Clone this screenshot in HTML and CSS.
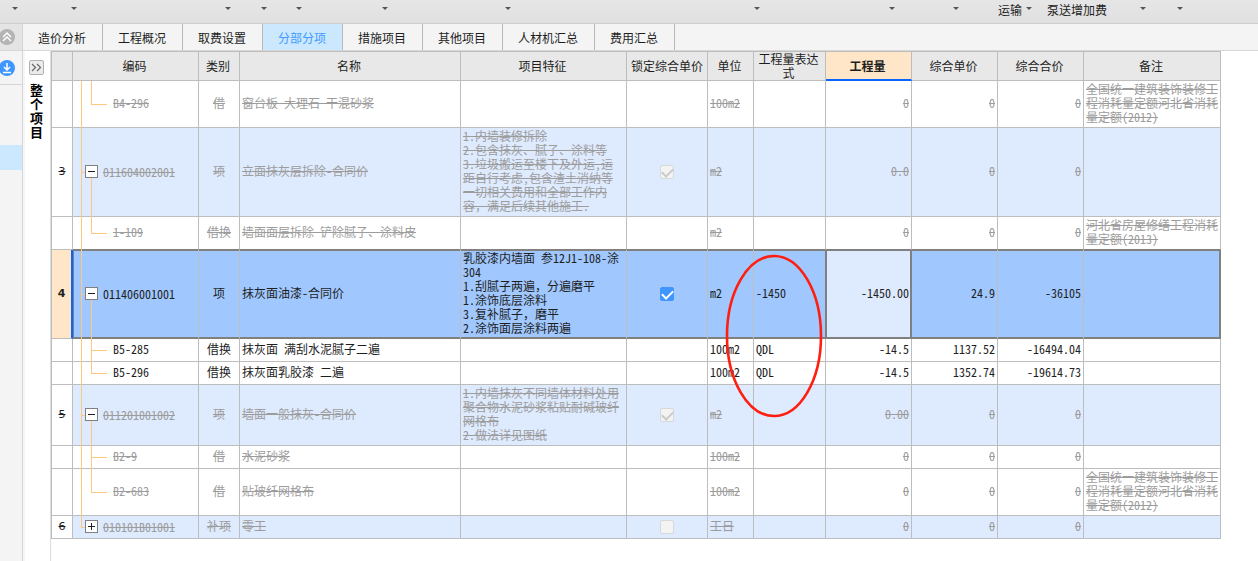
FILE: index.html
```html
<!DOCTYPE html>
<html lang="zh-CN">
<head>
<meta charset="utf-8">
<title>分部分项</title>
<link rel="stylesheet" href="styles.css">
</head>
<body>
<div class="app">
  <header class="toolbar">
    <button class="tool" aria-label="菜单"><i class="caret"></i></button>
    <button class="tool" aria-label="菜单"><i class="caret"></i></button>
    <button class="tool" aria-label="菜单"><i class="caret"></i></button>
    <button class="tool" aria-label="菜单"><i class="caret"></i></button>
    <button class="tool" aria-label="菜单"><i class="caret"></i></button>
    <button class="tool" aria-label="菜单"><i class="caret"></i></button>
    <button class="tool" aria-label="菜单"><i class="caret"></i></button>
    <button class="tool" aria-label="菜单"><i class="caret"></i></button>
    <button class="tool" aria-label="菜单"><i class="caret"></i></button>
    <button class="tool" aria-label="菜单"><i class="caret"></i></button>
    <button class="tool">运输<i class="caret"></i></button>
    <button class="tool">泵送增加费</button>
    <button class="tool" aria-label="菜单"><i class="caret"></i></button>
    <button class="tool" aria-label="菜单"><i class="caret"></i></button>
  </header>

  <nav class="tabs">
    <button class="fold" aria-label="折叠">
      <svg width="16" height="16" viewBox="0 0 16 16"><circle cx="8" cy="8" r="8" fill="#b4b4b4"/><path d="M4 8l4-4 4 4M4 12l4-4 4 4" fill="none" stroke="#fff" stroke-width="1.5"/></svg>
    </button>
    <button class="tab">造价分析</button>
    <button class="tab">工程概况</button>
    <button class="tab">取费设置</button>
    <button class="tab tab-active">分部分项</button>
    <button class="tab">措施项目</button>
    <button class="tab">其他项目</button>
    <button class="tab">人材机汇总</button>
    <button class="tab">费用汇总</button>
  </nav>

  <div class="main">
    <aside class="rail">
      <button class="rail-top" aria-label="导入">
        <svg width="16" height="16" viewBox="0 0 16 16"><circle cx="8" cy="8" r="8" fill="#4096ff"/><path d="M8 3v7M5 7l3 3 3-3M4 12.500h8" fill="none" stroke="#fff" stroke-width="1.500"/></svg>
      </button>
      <div class="rail-item"></div>
    </aside>
    <aside class="project">
      <button class="expand" aria-label="展开">
        <svg width="13" height="13" viewBox="0 0 13 13"><path d="M2 3l3.500 3.500L2 10M7 3l3.500 3.500L7 10" fill="none" stroke="#666" stroke-width="1.200"/></svg>
      </button>
      <div class="project-name">整个项目</div>
    </aside>
    <main class="sheet">
      <table class="grid">
        <colgroup>
          <col class="c-num"><col class="c-code"><col class="c-type"><col class="c-name"><col class="c-feat"><col class="c-lock"><col class="c-unit"><col class="c-expr"><col class="c-qty"><col class="c-qty"><col class="c-qty"><col>
        </colgroup>
        <thead>
          <tr><th></th><th>编码</th><th>类别</th><th>名称</th><th>项目特征</th><th class="tight">锁定综合单价</th><th>单位</th><th>工程量表达式</th><th class="current">工程量</th><th>综合单价</th><th>综合合价</th><th>备注</th></tr>
        </thead>
        <tbody>
          <tr class="off"><td class="num"></td><td class="code child last"><span>B4-296</span></td><td class="mid">借</td><td>窗台板 大理石 干混砂浆</td><td></td><td></td><td>100m2</td><td></td><td class="val">0</td><td class="val">0</td><td class="val">0</td><td class="note">全国统一建筑装饰装修工<br>程消耗量定额河北省消耗<br>量定额(2012)</td></tr>
          <tr class="off item"><td class="num">3</td><td class="code parent"><button class="toggle" aria-label="收起"></button><span>011604002001</span></td><td class="mid">项</td><td>立面抹灰层拆除-合同价</td><td>1.内墙装修拆除<br>2.包含抹灰、腻子、涂料等<br>3.垃圾搬运至楼下及外运,运<br>距自行考虑,包含渣土消纳等<br>一切相关费用和全部工作内<br>容，满足后续其他施工.</td><td class="mid"><input type="checkbox" class="check" aria-label="锁定综合单价" checked disabled></td><td>m2</td><td></td><td class="val">0.0</td><td class="val">0</td><td class="val">0</td><td></td></tr>
          <tr class="off before-current"><td class="num"></td><td class="code child last"><span>1-109</span></td><td class="mid">借换</td><td>墙面面层拆除 铲除腻子、涂料皮</td><td></td><td></td><td>m2</td><td></td><td class="val">0</td><td class="val">0</td><td class="val">0</td><td class="note">河北省房屋修缮工程消耗<br>量定额(2013)</td></tr>
          <tr class="selected"><td class="num">4</td><td class="code parent"><button class="toggle" aria-label="收起"></button><span>011406001001</span></td><td class="mid">项</td><td>抹灰面油漆-合同价</td><td>乳胶漆内墙面 参12J1-108-涂<br>304<br>1.刮腻子两遍，分遍磨平<br>1.涂饰底层涂料<br>3.复补腻子，磨平<br>2.涂饰面层涂料两遍</td><td class="mid"><input type="checkbox" class="check" aria-label="锁定综合单价" checked></td><td>m2</td><td class="pre-focus">-1450</td><td class="val focus">-1450.00</td><td class="val">24.9</td><td class="val">-36105</td><td class="end"></td></tr>
          <tr><td class="num"></td><td class="code child"><span>B5-285</span></td><td class="mid">借换</td><td>抹灰面 满刮水泥腻子二遍</td><td></td><td></td><td>100m2</td><td>QDL</td><td class="val">-14.5</td><td class="val">1137.52</td><td class="val">-16494.04</td><td></td></tr>
          <tr><td class="num"></td><td class="code child last"><span>B5-296</span></td><td class="mid">借换</td><td>抹灰面乳胶漆 二遍</td><td></td><td></td><td>100m2</td><td>QDL</td><td class="val">-14.5</td><td class="val">1352.74</td><td class="val">-19614.73</td><td></td></tr>
          <tr class="off item"><td class="num">5</td><td class="code parent"><button class="toggle" aria-label="收起"></button><span>011201001002</span></td><td class="mid">项</td><td>墙面一般抹灰-合同价</td><td>1.内墙抹灰不同墙体材料处用<br>聚合物水泥砂浆粘贴耐碱玻纤<br>网格布<br>2.做法详见图纸</td><td class="mid"><input type="checkbox" class="check" aria-label="锁定综合单价" checked disabled></td><td>m2</td><td></td><td class="val">0.00</td><td class="val">0</td><td class="val">0</td><td></td></tr>
          <tr class="off"><td class="num"></td><td class="code child"><span>B2-9</span></td><td class="mid">借</td><td>水泥砂浆</td><td></td><td></td><td>100m2</td><td></td><td class="val">0</td><td class="val">0</td><td class="val">0</td><td></td></tr>
          <tr class="off"><td class="num"></td><td class="code child last"><span>B2-683</span></td><td class="mid">借</td><td>贴玻纤网格布</td><td></td><td></td><td>100m2</td><td></td><td class="val">0</td><td class="val">0</td><td class="val">0</td><td class="note">全国统一建筑装饰装修工<br>程消耗量定额河北省消耗<br>量定额(2012)</td></tr>
          <tr class="off item"><td class="num">6</td><td class="code parent closed"><button class="toggle" aria-label="展开"></button><span>010101B01001</span></td><td class="mid">补项</td><td>零工</td><td></td><td class="mid"><input type="checkbox" class="check" aria-label="锁定综合单价" disabled></td><td>工日</td><td></td><td class="val">0</td><td class="val">0</td><td class="val">0</td><td></td></tr>
        </tbody>
      </table>
      <svg class="marker" width="98" height="164" viewBox="0 0 98 164"><ellipse cx="49" cy="82" rx="47" ry="80" fill="none" stroke="#ff1e10" stroke-width="2.600"/></svg>
    </main>
  </div>
</div>
</body>
</html>
```
FILE: styles.css
```css
* { box-sizing: border-box; }

body {
  margin: 0;
  background: #fff;
  color: #1e1e1e;
  font: 12px/14px "Noto Sans Mono CJK SC", "Noto Sans CJK SC", sans-serif;
  overflow: hidden;
}

button {
  padding: 0;
  border: 0;
  background: none;
  color: inherit;
  font: inherit;
}

svg { display: block; }

.app {
  display: flex;
  flex-direction: column;
  height: 100vh;
}

/* toolbar */
.toolbar {
  display: grid;
  grid-template-columns: 18px 59px 154px 36px 35px 86px 123px 249px 135px 64px 73px 75px 39px 37px;
  height: 24px;
  padding-bottom: 4px;
  background: linear-gradient(#e6e6e6, #e0e0e0);
  border-bottom: 1px solid #cdcdcd;
}

.tool {
  display: flex;
  align-items: center;
  justify-content: flex-end;
  gap: 4px;
  white-space: nowrap;
}

.caret {
  width: 0;
  height: 0;
  margin-bottom: 2px;
  border: 3px solid transparent;
  border-top-color: #555;
  border-bottom: 0;
}

/* page tabs */
.tabs {
  display: flex;
  height: 27px;
  background: #f4f4f4;
  border-bottom: 1px solid #d8d8d8;
}

.fold {
  display: flex;
  align-items: center;
  width: 23px;
  background: #e4e4e4;
  border-right: 1px solid #d4d4d4;
}

.fold svg, .rail-top svg { margin-left: -1px; }

.tab {
  padding: 2px 16px 0 15px;
  border-right: 1px solid #b8b8b8;
}

.tab-active {
  background: #cce8ff;
  color: #409aff;
}

/* left side */
.main {
  display: flex;
  flex: 1;
  min-height: 0;
}

.rail {
  width: 25px;
  background: linear-gradient(90deg, #f4f4f4 22px, #d6d6d6 22px 23px, #f6f6f6 23px);
}

.rail-top {
  display: flex;
  align-items: center;
  width: 22px;
  height: 34px;
  border-bottom: 1px solid #d6d6d6;
}

.rail-item {
  width: 22px;
  height: 25px;
  margin-top: 60px;
  background: #cce8ff;
}

.project {
  display: flex;
  flex-direction: column;
  align-items: center;
  width: 26px;
  padding: 9px 2px 0 0;
  border-right: 1px solid #dcdcdc;
}

.expand {
  width: 15px;
  height: 15px;
  border: 1px solid #b0b0b0;
  border-radius: 2px;
  background: #ebebeb;
}

.project-name {
  width: 13px;
  margin-top: 8px;
  color: #000;
  font-size: 13px;
  font-weight: 700;
  word-break: break-all;
}

/* bill of quantities */
.sheet {
  position: relative;
  flex: 1;
  padding-right: 37px;
}

.grid {
  width: 100%;
  table-layout: fixed;
  border-spacing: 0;
  border-top: 1px solid #bdbdbd;
  border-left: 1px solid #bdbdbd;
}

.c-num { width: 21px; }
.c-code { width: 126px; }
.c-type { width: 41px; }
.c-name { width: 221px; }
.c-feat { width: 166px; }
.c-lock { width: 81px; }
.c-unit { width: 46px; }
.c-expr { width: 72px; }
.c-qty { width: 86px; }

th {
  height: 29px;
  padding: 0 6px 0 4px;
  background: #e8e8e8;
  border-right: 1px solid #bdbdbd;
  border-bottom: 1px solid #bdbdbd;
  font-weight: 400;
}

.tight { padding: 0; }

.current {
  background: #ffe6c8;
  border-bottom: 2px solid #0a64ff;
  font-weight: 700;
}

td {
  height: 23px;
  padding: 1px 2px 3px;
  border-right: 1px solid #bdbdbd;
  border-bottom: 1px solid #bdbdbd;
}

.mid { text-align: center; }
.val { text-align: right; }
.note { white-space: nowrap; }

.num {
  padding: 0;
  font-family: "DejaVu Sans", sans-serif;
  font-size: 11px;
  text-align: center;
}

.off td {
  color: #9c9c9c;
  text-decoration: line-through;
}

.off .num { color: #1e1e1e; }
.item td { background: #deeafe; }
.item .num { background: #fff; }

/* tree lines in the code column */
.code { position: relative; }

.code::before, .code::after {
  content: "";
  position: absolute;
  top: 0;
  bottom: -1px;
  width: 1px;
  background: #ffc880;
}

.code::before { left: 8px; }
.code::after { left: 18px; }
.code.last::after { bottom: 50%; }
.code.closed::before { bottom: 50%; }
.code.parent::after { top: 50%; }
.code.closed::after { display: none; }

.parent { padding: 0 0 0 12px; }
.child { padding-left: 40px; }

.code span::before {
  content: "";
  position: absolute;
  top: 50%;
  left: 18px;
  width: 16px;
  height: 1px;
  background: #ffc880;
}

.parent span::before {
  left: 8px;
  width: 4px;
}

.toggle {
  position: relative;
  z-index: 1;
  width: 13px;
  height: 13px;
  margin-right: 5px;
  border: 1px solid #808080;
  background: linear-gradient(#1e1e1e, #1e1e1e) center / 7px 1px no-repeat, #fff;
  vertical-align: top;
}

.closed .toggle {
  background: linear-gradient(#1e1e1e, #1e1e1e) center / 7px 1px no-repeat, linear-gradient(#1e1e1e, #1e1e1e) center / 1px 7px no-repeat, #fff;
}

/* selected row */
.before-current td { border-bottom-color: #808080; }
.before-current .num { border-bottom-color: #bdbdbd; }

.selected td {
  background: #a0c8fe;
  border-bottom-color: #808080;
  box-shadow: inset 0 1px #808080, inset 0 -1px #808080;
}

.selected .num {
  background: #ffe6c8;
  border-right: 2px solid #0a64ff;
  border-bottom-color: #bdbdbd;
  box-shadow: none;
  font-weight: 700;
}

.selected .code { box-shadow: inset 1px 1px #808080, inset 0 -1px #808080; }
.selected .pre-focus { border-right-color: #808080; }

.selected .focus {
  background: #deeafe;
  border-right-color: #808080;
  box-shadow: inset 1px 1px #808080, inset -1px -1px #808080;
}

.selected .end {
  border-right-color: #808080;
  box-shadow: inset 0 1px #808080, inset -1px -1px #808080;
}

.check {
  appearance: none;
  display: inline-grid;
  place-items: center;
  width: 14px;
  height: 14px;
  margin: 0;
  border: 1px solid #4096ff;
  border-radius: 2px;
  background: #4096ff;
  vertical-align: middle;
}

.check:disabled {
  border-color: #d8d8d8;
  background: #f3f3f3;
}

.check:checked::after {
  content: "";
  width: 5px;
  height: 9px;
  margin-bottom: 3px;
  border: solid #fff;
  border-width: 0 2px 2px 0;
  transform: rotate(45deg);
}

.check:checked:disabled::after { border-color: #cacaca; }

/* hand-drawn annotation over the expression column */
.marker {
  position: absolute;
  top: 203px;
  left: 674px;
  pointer-events: none;
}
```
